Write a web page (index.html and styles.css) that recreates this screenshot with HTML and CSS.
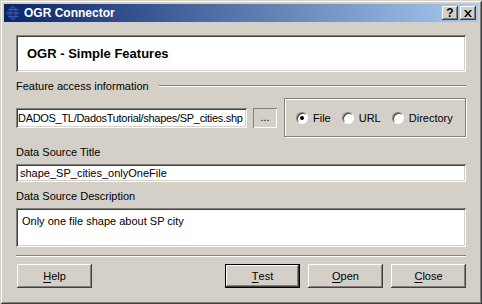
FILE: index.html
```
<!DOCTYPE html>
<html lang="en">
<head>
    <meta charset="UTF-8">
    <title>OGR Connector</title>
    <link rel="stylesheet" href="styles.css">
</head>
<body>
    <div class="window">
        <div class="titlebar">
            <svg class="app-icon" width="14" height="14" viewBox="0 0 14 14">
                <circle cx="7" cy="7" r="6.5" fill="#16307a"/>
                <ellipse cx="7" cy="7" rx="3" ry="6.3" fill="none" stroke="#3a5aa8" stroke-width="1"/>
                <line x1="0.5" y1="7" x2="13.5" y2="7" stroke="#3a5aa8" stroke-width="1"/>
                <line x1="2" y1="3.5" x2="12" y2="3.5" stroke="#3a5aa8" stroke-width="1"/>
                <line x1="2" y1="10.5" x2="12" y2="10.5" stroke="#3a5aa8" stroke-width="1"/>
            </svg>
            <span class="title">OGR Connector</span>
            <div class="caption-buttons">
                <div class="caption-btn">?</div>
                <div class="caption-btn close">
                    <svg width="8" height="7" viewBox="0 0 8 7">
                        <path d="M0 0h2l2 2.5L6 0h2L5 3.5 8 7H6L4 4.5 2 7H0l3-3.5z" fill="#000"/>
                    </svg>
                </div>
            </div>
        </div>

        <div class="content">
            <div class="header-panel">OGR - Simple Features</div>

            <div class="group-label">
                <span>Feature access information</span>
                <div class="group-line"></div>
            </div>

            <div class="access-row">
                <div class="field path">DADOS_TL/DadosTutorial/shapes/SP_cities.shp</div>
                <div class="btn browse">...</div>
                <div class="radio-group">
                    <label class="radio"><span class="dot checked"></span>File</label>
                    <label class="radio"><span class="dot"></span>URL</label>
                    <label class="radio"><span class="dot"></span>Directory</label>
                </div>
            </div>

            <div class="label">Data Source Title</div>
            <div class="field title-field">shape_SP_cities_onlyOneFile</div>

            <div class="label desc-label">Data Source Description</div>
            <div class="field desc-field">Only one file shape about SP city</div>

            <div class="separator"></div>

            <div class="button-row">
                <div class="btn"><u>H</u>elp</div>
                <div class="spacer"></div>
                <div class="btn default"><u>T</u>est</div>
                <div class="btn"><u>O</u>pen</div>
                <div class="btn"><u>C</u>lose</div>
            </div>
        </div>
    </div>
</body>
</html>
```

FILE: styles.css
```
:root {
    --face: #d4d0c8;
    --shadow: #808080;
    --dark: #404040;
    --light: #fff;
}

* {
    box-sizing: border-box;
    margin: 0;
    padding: 0;
}

body {
    background: var(--face);
    font-family: 'Liberation Sans', Arial, sans-serif;
    font-size: 11px;
    color: #000;
}

.window {
    width: 482px;
    height: 304px;
    background: var(--face);
    padding: 4px;
    box-shadow:
        inset 1px 1px var(--face),
        inset -1px -1px var(--dark),
        inset 2px 2px var(--light),
        inset -2px -2px var(--shadow);
    display: flex;
    flex-direction: column;
}

.titlebar {
    height: 18px;
    background: linear-gradient(90deg, #0a246a, #a6caf0);
    display: flex;
    align-items: center;
    padding: 0 2px;
    color: #fff;
}

.app-icon {
    margin-right: 4px;
}

.title {
    font-weight: bold;
    font-size: 12px;
    flex: 1;
}

.caption-buttons {
    display: flex;
    gap: 2px;
}

.caption-btn {
    width: 16px;
    height: 14px;
    background: var(--face);
    color: #000;
    font-weight: bold;
    font-size: 12px;
    display: flex;
    align-items: center;
    justify-content: center;
    box-shadow:
        inset -1px -1px var(--dark),
        inset 1px 1px var(--light),
        inset -2px -2px var(--shadow);
}

.content {
    flex: 1;
    padding: 13px 8px 0 12px;
    display: flex;
    flex-direction: column;
}

.header-panel {
    height: 37px;
    width: 450px;
    background: #fff;
    font-weight: bold;
    font-size: 13px;
    padding-left: 11px;
    display: flex;
    align-items: center;
    box-shadow:
        inset 1px 1px var(--shadow),
        inset -1px -1px var(--light),
        inset 2px 2px var(--dark),
        inset -2px -2px var(--face);
}

.group-label {
    display: flex;
    align-items: center;
    margin-top: 7px;
    width: 450px;
    height: 14px;
    line-height: 14px;
}

.group-line {
    flex: 1;
    height: 2px;
    margin-left: 10px;
    border-top: 1px solid var(--shadow);
    border-bottom: 1px solid var(--light);
}

.access-row {
    display: flex;
    align-items: center;
    margin-top: 5px;
    width: 450px;
    height: 39px;
}

.field {
    background: #fff;
    box-shadow:
        inset 1px 1px var(--shadow),
        inset -1px -1px var(--light),
        inset 2px 2px var(--dark),
        inset -2px -2px var(--face);
    white-space: nowrap;
    overflow: hidden;
}

.path {
    width: 231px;
    height: 20px;
    line-height: 20px;
    padding-left: 2px;
    letter-spacing: -0.3px;
}

.btn {
    height: 24px;
    width: 75px;
    display: flex;
    align-items: center;
    justify-content: center;
    background: var(--face);
    box-shadow:
        inset -1px -1px var(--dark),
        inset 1px 1px var(--light),
        inset -2px -2px var(--shadow);
}

.btn u {
    text-decoration-thickness: 1px;
    text-underline-offset: 2px;
}

.browse {
    width: 24px;
    height: 20px;
    margin-left: 6px;
    padding-bottom: 2px;
    box-shadow:
        inset 1px 1px var(--shadow),
        inset -1px -1px var(--light);
}

.radio-group {
    margin-left: 7px;
    flex: 1;
    height: 39px;
    display: flex;
    align-items: center;
    padding-left: 11px;
    gap: 11px;
    border: 1px solid var(--shadow);
    box-shadow: inset 1px 1px var(--light), 1px 1px var(--light);
}

.radio {
    display: flex;
    align-items: center;
    gap: 5px;
}

.dot {
    width: 12px;
    height: 12px;
    border-radius: 50%;
    background: #fff;
    border: 1px solid;
    border-color: var(--shadow) var(--light) var(--light) var(--shadow);
    box-shadow: inset 1px 1px var(--dark);
    display: flex;
    align-items: center;
    justify-content: center;
}

.dot.checked::after {
    content: '';
    width: 4px;
    height: 4px;
    border-radius: 50%;
    background: #000;
}

.label {
    margin-top: 8px;
    height: 14px;
    line-height: 14px;
}

.title-field {
    margin-top: 5px;
    width: 450px;
    height: 18px;
    line-height: 18px;
    padding-left: 4px;
}

.desc-label {
    margin-top: 7px;
}

.desc-field {
    margin-top: 5px;
    width: 450px;
    height: 39px;
    padding: 7px 0 0 6px;
}

.separator {
    margin-top: 8px;
    width: 450px;
    height: 2px;
    border-top: 1px solid var(--shadow);
    border-bottom: 1px solid var(--light);
}

.button-row {
    margin-top: 7px;
    width: 450px;
    display: flex;
    gap: 8px;
    padding-left: 1px;
}

.spacer {
    flex: 1;
}

.btn.default {
    box-shadow:
        inset 1px 1px #000,
        inset -1px -1px #000,
        inset -2px -2px var(--dark),
        inset 2px 2px var(--light),
        inset -3px -3px var(--shadow);
}
```
